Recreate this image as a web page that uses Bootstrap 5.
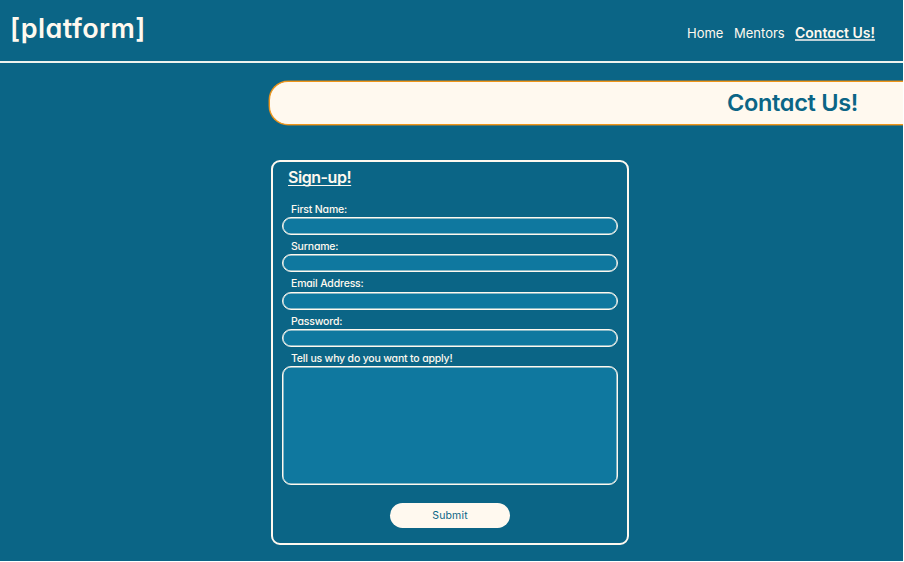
<!DOCTYPE html>
<html lang="en">
<head>
<meta charset="utf-8">
<meta name="viewport" content="width=device-width, initial-scale=1">
<title>Contact Us</title>
<link href="https://cdn.jsdelivr.net/npm/bootstrap@5.3.0/dist/css/bootstrap.min.css" rel="stylesheet">
<style>
:root{--sea:#0b6586;--cream:#fff9ef;--field:#0f789f}
body{background:#fff;font-family:Inter,"Open Sans",sans-serif;font-feature-settings:"cv11";overflow:hidden}
.page{width:903px;height:561px;background:var(--sea);color:var(--cream);overflow:hidden}
.site-header{height:63px;padding:0 28px 0 10px;border-bottom:2px solid #eff3ee}
.navbar-brand{font-size:27px;line-height:32px;font-weight:600;letter-spacing:.42px;color:var(--cream)!important;margin-top:-3px}
.site-nav{gap:10px;margin-top:5px}
.site-nav .nav-link{padding:0;font-size:13px;line-height:20px;color:var(--cream);white-space:nowrap}
.site-nav .active{font-weight:600;font-size:14px;text-decoration:underline;text-decoration-thickness:2px;text-decoration-color:#bdd0d6;text-underline-offset:1px;text-decoration-skip-ink:none}
.w-home{width:37px}.w-mentors{width:51px}.w-contact{width:80px}
.banner{margin:18px 0 0 269px;height:44px;padding:0 45px 1px 0;background:var(--cream);border:1px solid #f09518;border-right:0;box-shadow:0 0 0 .5px #c98a2a;border-radius:19px 0 0 19px;color:#0b6586}
.banner h1{font-size:23.5px;font-weight:600;line-height:1;letter-spacing:-.3px;margin:0}
.signup{width:358px;height:385px;margin:35px 0 0 271px;padding:5px 9px 0;border:2px solid var(--cream);border-radius:9px}
.signup h2{font-size:16px;line-height:20px;font-weight:600;letter-spacing:-.45px;margin:0 0 17px 6px;text-decoration:underline;text-decoration-thickness:1px;text-underline-offset:2px;text-decoration-skip-ink:none}
.signup label{display:block;font-size:10.5px;line-height:12.2px;height:13.2px;font-weight:500;letter-spacing:-.18px;margin-left:9px}
.signup .form-control{height:18px;min-height:0;padding:0 8px;background:var(--field);border:1px solid var(--cream);box-shadow:inset 0 0 0 .5px var(--cream);border-radius:9px;color:var(--cream);font-size:10px;margin-bottom:6px}
.signup textarea.form-control{height:119px;resize:none;margin-bottom:18px}
.submit{width:120px;height:25px;padding:0;border:0;border-radius:13px;background:var(--cream);color:#0b6586;font-size:10.5px;line-height:25px;letter-spacing:.15px}
</style>
</head>
<body>
<div class="page">
<header class="site-header d-flex align-items-center justify-content-between">
<a class="navbar-brand me-0" href="#">[platform]</a>
<nav class="site-nav nav flex-nowrap">
<a class="nav-link w-home" href="#">Home</a>
<a class="nav-link w-mentors" href="#">Mentors</a>
<a class="nav-link active w-contact" href="#">Contact Us!</a>
</nav>
</header>
<div class="banner d-flex align-items-center justify-content-end"><h1>Contact Us!</h1></div>
<form class="signup">
<h2>Sign-up!</h2>
<label for="first">First Name:</label><input class="form-control" id="first" type="text">
<label for="last">Surname:</label><input class="form-control" id="last" type="text">
<label for="mail">Email Address:</label><input class="form-control" id="mail" type="email">
<label for="pass">Password:</label><input class="form-control" id="pass" type="password">
<label for="why">Tell us why do you want to apply!</label><textarea class="form-control" id="why"></textarea>
<button class="submit btn d-block mx-auto" type="button">Submit</button>
</form>
</div>
<script src="https://cdn.jsdelivr.net/npm/bootstrap@5.3.0/dist/js/bootstrap.bundle.min.js"></script>
</body>
</html>
